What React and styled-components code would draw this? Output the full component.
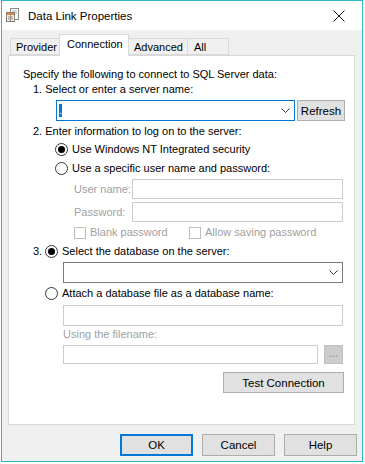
import React from 'react'
import styled, { createGlobalStyle } from 'styled-components'

const GlobalStyle = createGlobalStyle`
  html, body {
    margin: 0;
    padding: 0;
    background: #ffffff;
  }
  body {
    font-family: "Liberation Sans", Arial, sans-serif;
    font-size: 11px;
    color: #000;
  }
`

const Window = styled.div`
  margin-left: 1px;
  width: 362px;
  height: 462px;
  box-sizing: border-box;
  border: 1px solid #2bb5c6;
  display: flex;
  flex-direction: column;
  background: #f0f0f0;
`

const TitleBar = styled.div`
  height: 29px;
  background: #ffffff;
  display: flex;
  align-items: center;
  padding-left: 3px;
  flex-shrink: 0;
`

const TitleText = styled.span`
  margin-left: 8px;
  font-size: 11.5px;
  flex: 1;
`

const CloseBox = styled.div`
  width: 46px;
  height: 29px;
  display: flex;
  align-items: center;
  justify-content: center;
`

const Body = styled.div`
  flex: 1;
  display: flex;
  flex-direction: column;
  padding: 0 7px 0 6px;
`

const TabStrip = styled.div`
  height: 25px;
  display: flex;
  align-items: flex-end;
  padding-left: 2px;
  position: relative;
  z-index: 1;
`

const Tab = styled.div`
  box-sizing: border-box;
  width: ${p => p.$w}px;
  height: ${p => (p.$active ? 22 : 17)}px;
  margin-bottom: ${p => (p.$active ? -1 : 0)}px;
  margin-left: ${p => (p.$active ? -1 : 0)}px;
  border: 1px solid #d9d9d9;
  border-bottom: ${p => (p.$active ? 'none' : '1px solid #d9d9d9')};
  border-left: ${p => (p.$first || p.$active ? '1px solid #d9d9d9' : 'none')};
  background: ${p => (p.$active ? '#ffffff' : '#f0f0f0')};
  display: flex;
  align-items: ${p => (p.$active ? 'flex-start' : 'center')};
  padding-top: ${p => (p.$active ? 3 : 0)}px;
  padding-left: ${p => p.$pl}px;
  font-size: 11px;
  white-space: nowrap;
`

const Panel = styled.div`
  box-sizing: border-box;
  height: 370px;
  flex-shrink: 0;
  background: #ffffff;
  border: 1px solid #d9d9d9;
  display: flex;
  flex-direction: column;
  padding-top: 11px;
`

const Line = styled.div`
  height: 15px;
  line-height: 15px;
  display: flex;
  align-items: center;
  margin-top: ${p => p.$mt || 0}px;
  padding-left: ${p => p.$pl || 0}px;
  color: ${p => (p.$disabled ? '#a0a0a0' : '#000')};
  white-space: nowrap;
`

const FieldRow = styled.div`
  display: flex;
  align-items: center;
  margin-top: ${p => p.$mt || 0}px;
  padding-left: ${p => p.$pl || 0}px;
  white-space: nowrap;
`

const FieldLabel = styled.span`
  width: ${p => p.$w}px;
  flex-shrink: 0;
  color: #a0a0a0;
`

const StepNum = styled.span`
  width: 12px;
`

const Combo = styled.div`
  box-sizing: border-box;
  width: ${p => p.$w}px;
  height: 21px;
  background: #fff;
  border: 1px solid ${p => (p.$focus ? '#0078d7' : '#7a7a7a')};
  display: flex;
  align-items: center;
  padding-left: 2px;
`

const ComboValue = styled.div`
  flex: 1;
  display: flex;
  align-items: center;
`

const Selection = styled.span`
  display: inline-block;
  width: 3px;
  height: 13px;
  background: #0078d7;
  color: #fff;
  line-height: 13px;
  font-size: 11px;
  overflow: hidden;
`

const Chevron = styled.div`
  width: 17px;
  display: flex;
  align-items: center;
  justify-content: center;
`

const TextBox = styled.div`
  box-sizing: border-box;
  width: ${p => p.$w}px;
  height: ${p => p.$h || 20}px;
  background: #fff;
  border: 1px solid #cccccc;
`

const Button = styled.button`
  box-sizing: border-box;
  width: ${p => p.$w}px;
  height: ${p => p.$h || 21}px;
  margin-left: ${p => p.$ml || 0}px;
  padding: 0;
  font-family: "Liberation Sans", Arial, sans-serif;
  font-size: 11.5px;
  color: #000;
  background: #e1e1e1;
  border: ${p => (p.$default ? '2px solid #0078d7' : '1px solid #adadad')};
  display: flex;
  align-items: center;
  justify-content: center;
`

const DotsButton = styled(Button)`
  background: #cccccc;
  border: 1px solid #bfbfbf;
  color: #838383;
  font-size: 10px;
  align-items: flex-end;
  padding-bottom: 4px;
`

const Radio = styled.span`
  box-sizing: border-box;
  width: 13px;
  height: 13px;
  border-radius: 50%;
  border: 1px solid #333333;
  background: #fff;
  display: inline-flex;
  align-items: center;
  justify-content: center;
  margin-right: 4px;
  flex-shrink: 0;

  &::after {
    content: '';
    width: 7px;
    height: 7px;
    border-radius: 50%;
    background: ${p => (p.$checked ? '#000' : 'transparent')};
  }
`

const Check = styled.span`
  box-sizing: border-box;
  width: 12px;
  height: 12px;
  border: 1px solid #bcbcbc;
  background: #fff;
  margin-right: 4px;
  flex-shrink: 0;
`

const CheckItem = styled.span`
  display: flex;
  align-items: center;
  width: ${p => p.$w}px;
  color: #a0a0a0;
`

const Footer = styled.div`
  display: flex;
  justify-content: flex-end;
  gap: 9px;
  margin-top: 9px;
  margin-right: -2px;
`

const AppIcon = () => (
  <svg width="15" height="15" viewBox="0 0 15 15">
    <rect x="5.5" y="0.5" width="8" height="11" fill="#fff" stroke="#8a8a8a" />
    <line x1="7" y1="3" x2="12" y2="3" stroke="#b0b0b0" />
    <line x1="7" y1="5" x2="12" y2="5" stroke="#b0b0b0" />
    <rect x="1.5" y="4.5" width="8" height="9" fill="#f4efe9" stroke="#8a7f76" />
    <rect x="2" y="5" width="7" height="2" fill="#d98a4a" />
    <line x1="3" y1="9" x2="8" y2="9" stroke="#9a8f86" />
    <line x1="3" y1="11" x2="8" y2="11" stroke="#9a8f86" />
    <line x1="5.5" y1="7" x2="5.5" y2="13" stroke="#9a8f86" />
  </svg>
)

const CloseIcon = () => (
  <svg width="12" height="12" viewBox="0 0 12 12">
    <path d="M0.5 0.5 L11.5 11.5 M11.5 0.5 L0.5 11.5" stroke="#111" strokeWidth="1" />
  </svg>
)

const ChevronIcon = () => (
  <svg width="9" height="5" viewBox="0 0 9 5">
    <path d="M0.5 0.5 L4.5 4.5 L8.5 0.5" fill="none" stroke="#333" strokeWidth="1" />
  </svg>
)

const App = () => {
  return (
    <>
      <GlobalStyle />
      <Window>
        <TitleBar>
          <AppIcon />
          <TitleText>Data Link Properties</TitleText>
          <CloseBox>
            <CloseIcon />
          </CloseBox>
        </TitleBar>
        <Body>
          <TabStrip>
            <Tab $w={50} $pl={5} $first>Provider</Tab>
            <Tab $w={70} $pl={7} $active>Connection</Tab>
            <Tab $w={59} $pl={5}>Advanced</Tab>
            <Tab $w={41} $pl={6}>All</Tab>
          </TabStrip>
          <Panel>
            <Line $pl={14}>Specify the following to connect to SQL Server data:</Line>
            <Line $pl={24}>1. Select or enter a server name:</Line>
            <FieldRow $mt={3} $pl={47}>
              <Combo $w={239} $focus>
                <ComboValue><Selection>.</Selection></ComboValue>
                <Chevron><ChevronIcon /></Chevron>
              </Combo>
              <Button $w={48} $ml={2}>Refresh</Button>
            </FieldRow>
            <Line $mt={3} $pl={24}>2. Enter information to log on to the server:</Line>
            <Line $mt={3} $pl={46}><Radio $checked />Use Windows NT Integrated security</Line>
            <Line $mt={4} $pl={46}><Radio />Use a specific user name and password:</Line>
            <FieldRow $mt={3} $pl={65}>
              <FieldLabel $w={58}>User name:</FieldLabel>
              <TextBox $w={211} />
            </FieldRow>
            <FieldRow $mt={3} $pl={65}>
              <FieldLabel $w={58}>Password:</FieldLabel>
              <TextBox $w={211} />
            </FieldRow>
            <Line $mt={3} $pl={65}>
              <CheckItem $w={115}><Check />Blank password</CheckItem>
              <CheckItem><Check />Allow saving password</CheckItem>
            </Line>
            <Line $mt={4} $pl={24}>
              <StepNum>3.</StepNum>
              <Radio $checked />Select the database on the server:
            </Line>
            <FieldRow $mt={3} $pl={54}>
              <Combo $w={280}>
                <ComboValue />
                <Chevron><ChevronIcon /></Chevron>
              </Combo>
            </FieldRow>
            <Line $mt={3} $pl={36}><Radio />Attach a database file as a database name:</Line>
            <FieldRow $mt={4} $pl={54}>
              <TextBox $w={280} $h={21} />
            </FieldRow>
            <Line $mt={1} $pl={54} $disabled>Using the filename:</Line>
            <FieldRow $mt={3} $pl={54}>
              <TextBox $w={255} $h={19} />
              <DotsButton $w={19} $h={19} $ml={6}>...</DotsButton>
            </FieldRow>
            <FieldRow $mt={8} $pl={214}>
              <Button $w={121}>Test Connection</Button>
            </FieldRow>
          </Panel>
          <Footer>
            <Button $w={73} $h={22} $default>OK</Button>
            <Button $w={73} $h={22}>Cancel</Button>
            <Button $w={73} $h={22}>Help</Button>
          </Footer>
        </Body>
      </Window>
    </>
  )
}

export default App
